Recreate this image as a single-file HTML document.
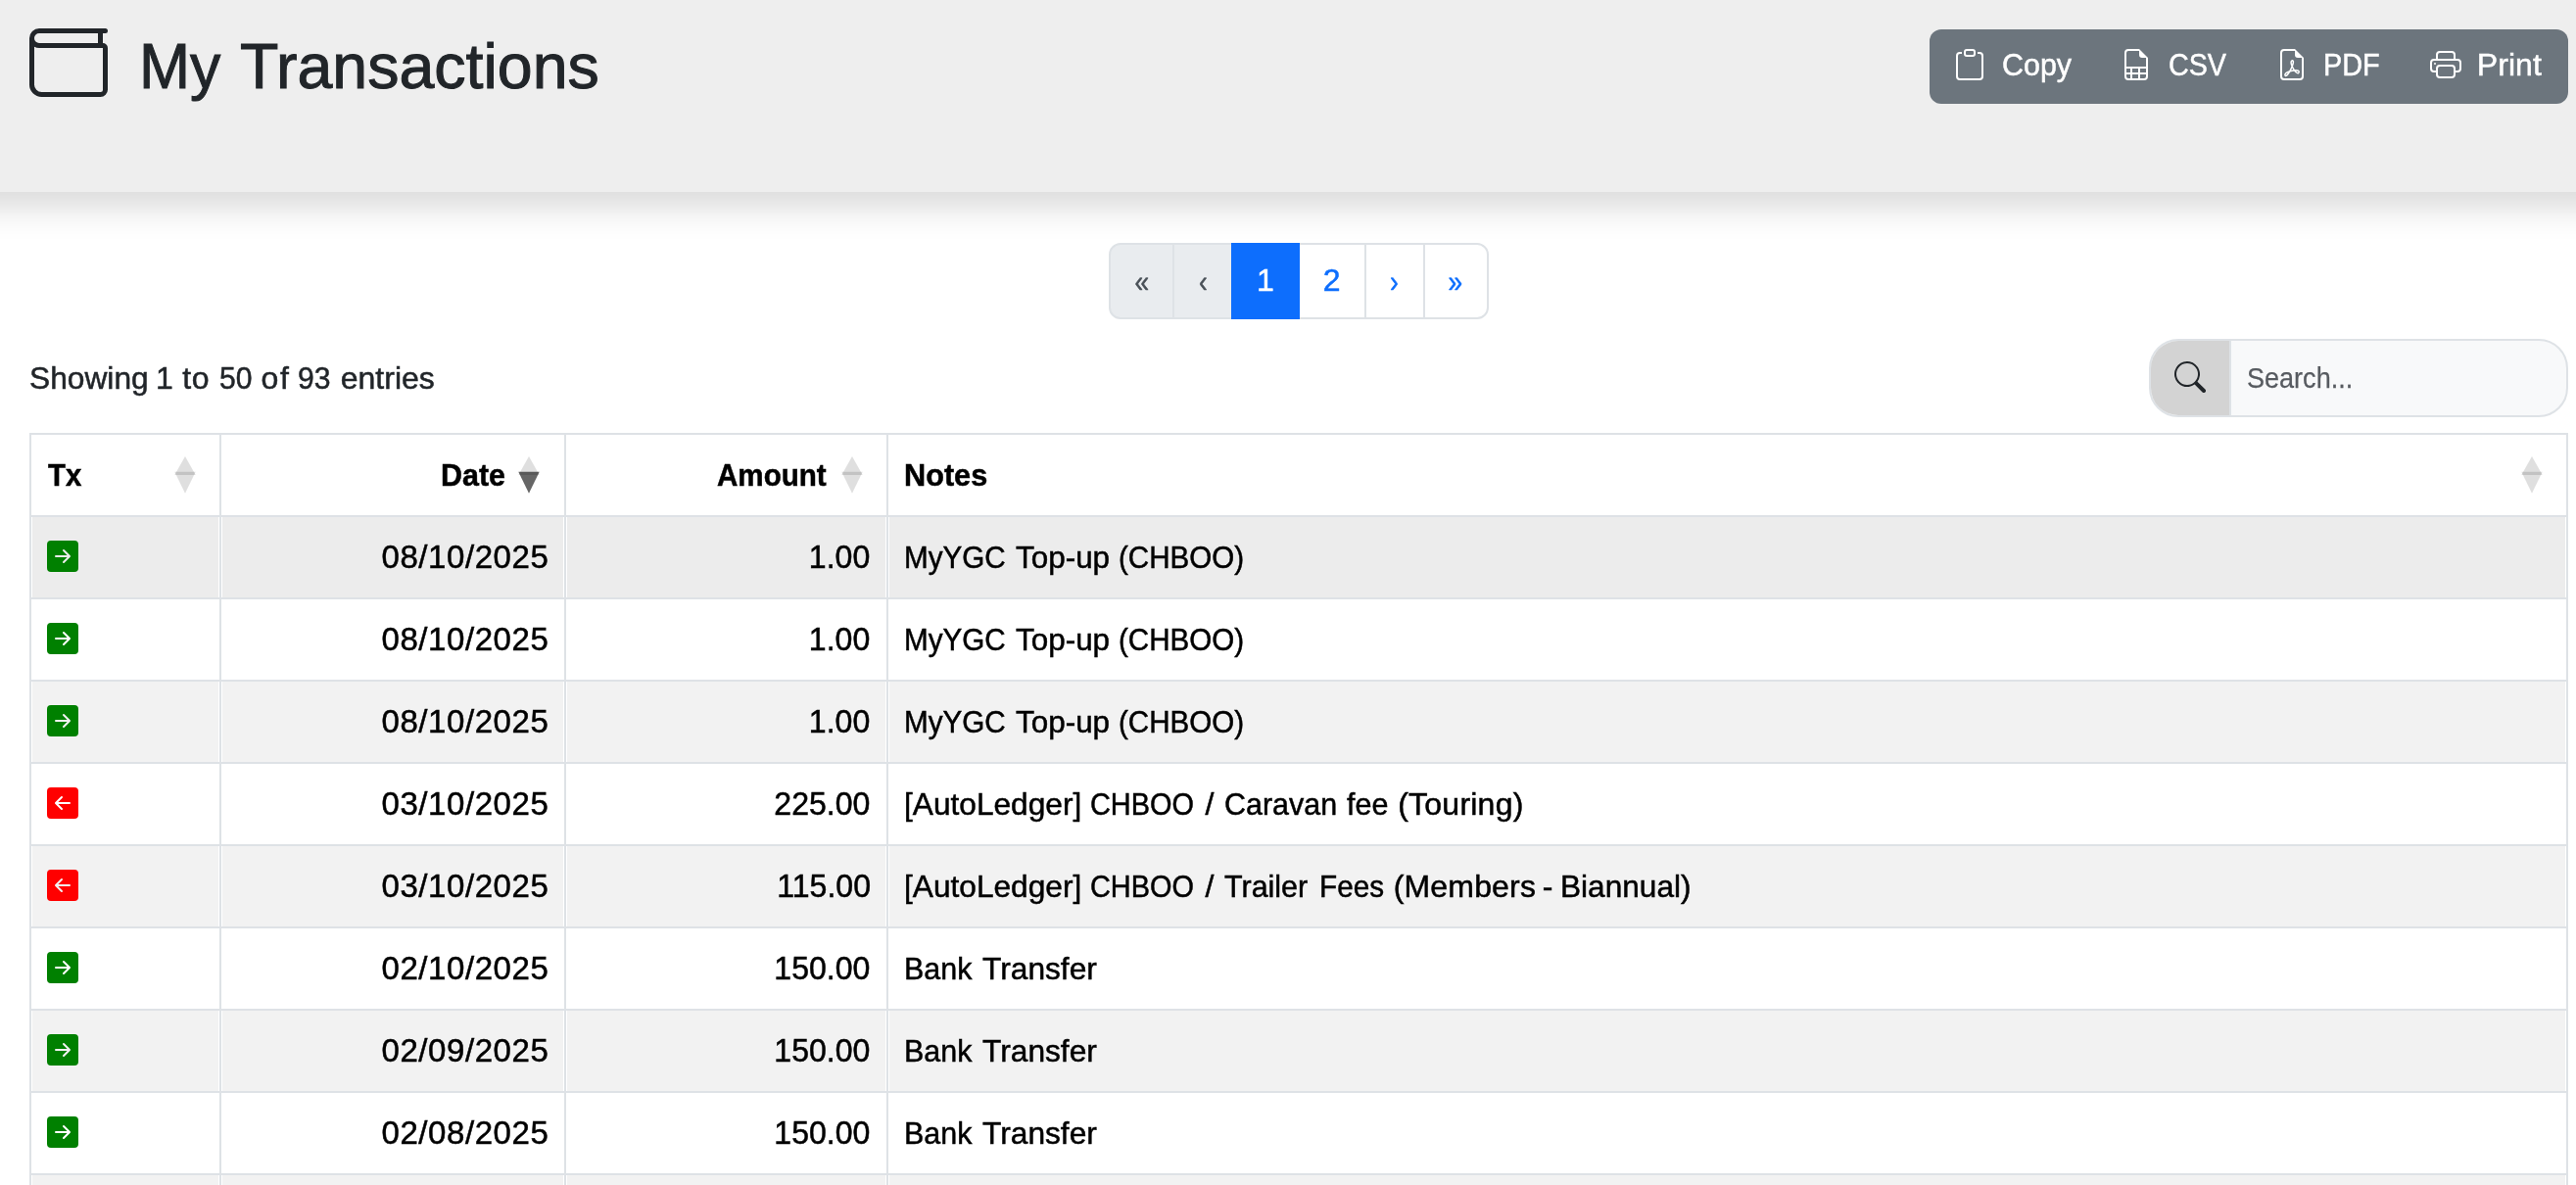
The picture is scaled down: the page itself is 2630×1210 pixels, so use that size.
<!DOCTYPE html>
<html lang="en">
<head>
<meta charset="utf-8">
<title>My Transactions</title>
<style>
html,body{margin:0;padding:0;}
body{width:2630px;height:1210px;overflow:hidden;background:#fff;position:relative;font-family:"Liberation Sans",sans-serif;font-size:32px;color:#212529;line-height:48px;-webkit-text-stroke:.5px;}
*{box-sizing:border-box;}
.page{position:absolute;left:0;top:0;width:2630px;height:1210px;overflow:hidden;will-change:transform;background:#fff;}
.w{display:inline-block;transform-origin:0 50%;white-space:nowrap;}
.hdr{position:absolute;left:-100px;top:0;width:2830px;height:196px;background:#eeeeee;box-shadow:0 16px 32px rgba(0,0,0,.15);}
.wallet{position:absolute;left:130px;top:24px;width:80px;height:80px;fill:#212529;}
.title{position:absolute;left:242px;top:28.5px;-webkit-text-stroke:1px #212529;margin:0;font-size:65px;line-height:77px;font-weight:400;color:#212529;white-space:nowrap;}
.btns{position:absolute;left:2070px;top:30px;width:652px;height:76px;background:#6c757d;border-radius:12px;color:#fff;}
.btns .b{position:absolute;top:0;height:76px;line-height:73px;white-space:nowrap;font-size:32px;}
.btns svg{position:absolute;width:32px;height:32px;fill:#fff;top:20px;}
.pager{position:absolute;left:1132px;top:248px;height:78px;display:flex;}
.pager div{height:78px;border:2px solid #dee2e6;margin-left:-2px;line-height:72px;text-align:center;font-size:32px;color:#0d6efd;background:#fff;}
.pager div:first-child{margin-left:0;border-radius:12px 0 0 12px;}
.pager div:last-child{border-radius:0 12px 12px 0;}
.pager .dis{background:#e9ecef;color:#495057;}
.pager .act{background:#0d6efd;border-color:#0d6efd;color:#fff;position:relative;z-index:2;}
.pager .g{display:inline-block;transform:scaleX(.82);position:relative;top:1px;}
.info{position:absolute;left:30px;top:362px;white-space:nowrap;color:#212529;}
.search{position:absolute;left:2194px;top:346px;width:428px;height:80px;border:2px solid #dee2e6;border-radius:30px;background:#f8f9fa;overflow:hidden;}
.search .addon{position:absolute;left:0;top:0;width:82px;height:76px;background:#d3d3d3;border-right:2px solid #dee2e6;}
.search svg{position:absolute;left:23.5px;top:20.5px;width:32px;height:32px;fill:#212529;}
.search .ph{position:absolute;top:14px;color:#575b60;-webkit-text-stroke:.25px;font-size:29px;line-height:48px;}
table{position:absolute;left:30px;top:442px;width:2592px;border-collapse:collapse;table-layout:fixed;color:#000;}
td,th{border:2px solid #dee2e6;height:84px;padding:0 16px;vertical-align:middle;white-space:nowrap;overflow:hidden;position:relative;}
th{font-weight:700;text-align:left;}
th .w{position:absolute;top:17px;}
.r{text-align:right;}
tr.s td{background:#f2f2f2;box-shadow:inset 1px 0 0 #fff,inset -1px 0 0 #fff;}
tr.h td{background:#ececec;box-shadow:inset 1px 0 0 #fff,inset -1px 0 0 #fff;}
.ic{display:block;width:32px;height:32px;position:relative;top:-1px;}
.sort{position:absolute;width:22px;height:38px;top:22px;}
.n{font-size:33px;}
</style>
</head>
<body>
<div class="page">
<div class="hdr">
<svg viewBox="0 0 16 16" class="wallet"><path d="M0 3a2 2 0 0 1 2-2h13.5a.5.5 0 0 1 0 1H15v2a1 1 0 0 1 1 1v8.5a1.5 1.5 0 0 1-1.5 1.5h-12A2.5 2.5 0 0 1 0 12.5zm1 1.732V12.5A1.5 1.5 0 0 0 2.5 14h12a.5.5 0 0 0 .5-.5V5H2a2 2 0 0 1-1-.268M1 3a1 1 0 0 0 1 1h12V2H2a1 1 0 0 0-1 1"/></svg>
<h2 class="title"><span class="w" style="transform:scaleX(0.9622);margin-left:0.270px;margin-right:-2.471px;">My</span> <span class="w" style="transform:scaleX(0.9924);">Transactions</span></h2>
<div class="btns">
<svg viewBox="0 0 16 16" style="left:25px"><path d="M4 1.5H3a2 2 0 0 0-2 2V14a2 2 0 0 0 2 2h10a2 2 0 0 0 2-2V3.5a2 2 0 0 0-2-2h-1v1h1a1 1 0 0 1 1 1V14a1 1 0 0 1-1 1H3a1 1 0 0 1-1-1V3.5a1 1 0 0 1 1-1h1z"/><path d="M9.5 1a.5.5 0 0 1 .5.5v1a.5.5 0 0 1-.5.5h-3a.5.5 0 0 1-.5-.5v-1a.5.5 0 0 1 .5-.5zm-3-1A1.5 1.5 0 0 0 5 1.5v1A1.5 1.5 0 0 0 6.5 4h3A1.5 1.5 0 0 0 11 2.5v-1A1.5 1.5 0 0 0 9.5 0z"/></svg>
<span class="b w" style="left:73.986px;transform:scaleX(0.9514);">Copy</span>
<svg viewBox="0 0 16 16" style="left:195px"><path d="M14 14V4.5L9.5 0H4a2 2 0 0 0-2 2v12a2 2 0 0 0 2 2h8a2 2 0 0 0 2-2M9.5 3A1.5 1.5 0 0 0 11 4.5h2V9H3V2a1 1 0 0 1 1-1h5.5zM3 12v-2h2v2zm0 1h2v2H4a1 1 0 0 1-1-1zm3 2v-2h3v2zm4 0v-2h3v1a1 1 0 0 1-1 1zm3-3h-3v-2h3zm-7 0v-2h3v2z"/></svg>
<span class="b w" style="left:243.928px;transform:scaleX(0.8961);">CSV</span>
<svg viewBox="0 0 16 16" style="left:354px"><path d="M14 14V4.5L9.5 0H4a2 2 0 0 0-2 2v12a2 2 0 0 0 2 2h8a2 2 0 0 0 2-2M9.5 3A1.5 1.5 0 0 0 11 4.5h2V14a1 1 0 0 1-1 1H4a1 1 0 0 1-1-1V2a1 1 0 0 1 1-1h5.5z"/><path d="M4.603 14.087a.8.8 0 0 1-.438-.42c-.195-.388-.13-.776.08-1.102.198-.307.526-.568.897-.787a7.7 7.7 0 0 1 1.482-.645 20 20 0 0 0 1.062-2.227 7.3 7.3 0 0 1-.43-1.295c-.086-.4-.119-.796-.046-1.136.075-.354.274-.672.65-.823.192-.077.4-.12.602-.077a.7.7 0 0 1 .477.365c.088.164.12.356.127.538.007.188-.012.396-.047.614-.084.51-.27 1.134-.52 1.794a11 11 0 0 0 .98 1.686 5.8 5.8 0 0 1 1.334.05c.364.066.734.195.96.465.12.144.193.32.2.518.007.192-.047.382-.138.563a1.04 1.04 0 0 1-.354.416.86.86 0 0 1-.51.138c-.331-.014-.654-.196-.933-.417a5.7 5.7 0 0 1-.911-.95 11.7 11.7 0 0 0-1.997.406 11.3 11.3 0 0 1-1.02 1.51c-.292.35-.609.656-.927.787a.8.8 0 0 1-.58.029m1.379-1.901q-.25.115-.459.238c-.328.194-.541.383-.647.547-.094.145-.096.25-.04.361q.016.032.026.044l.035-.012c.137-.056.355-.235.635-.572a8 8 0 0 0 .45-.606m1.640-1.330a13 13 0 0 1 1.010-.193 12 12 0 0 1-.510-.858 21 21 0 0 1-.500 1.050zm2.446.450q.226.245.435.410c.240.190.407.253.498.256a.1.1 0 0 0 .070-.015.3.3 0 0 0 .094-.125.44.44 0 0 0 .059-.200.1.1 0 0 0-.026-.063c-.052-.062-.200-.152-.518-.209a4 4 0 0 0-.612-.053zM8.078 7.800a7 7 0 0 0 .200-.828q.046-.282.038-.465a.6.6 0 0 0-.032-.198.5.5 0 0 0-.145.040c-.087.035-.158.106-.196.283-.040.192-.030.469.046.822q.036.167.090.346z"/></svg>
<span class="b w" style="left:402.021px;transform:scaleX(0.9023);">PDF</span>
<svg viewBox="0 0 16 16" style="left:511px"><path d="M2.5 8a.5.5 0 1 0 0-1 .5.5 0 0 0 0 1"/><path d="M5 1a2 2 0 0 0-2 2v2H2a2 2 0 0 0-2 2v3a2 2 0 0 0 2 2h1v1a2 2 0 0 0 2 2h6a2 2 0 0 0 2-2v-1h1a2 2 0 0 0 2-2V7a2 2 0 0 0-2-2h-1V3a2 2 0 0 0-2-2zM4 3a1 1 0 0 1 1-1h6a1 1 0 0 1 1 1v2H4zm1 5a2 2 0 0 0-2 2v1H2a1 1 0 0 1-1-1V7a1 1 0 0 1 1-1h12a1 1 0 0 1 1 1v3a1 1 0 0 1-1 1h-1v-1a2 2 0 0 0-2-2zm7 2v3a1 1 0 0 1-1 1H5a1 1 0 0 1-1-1v-3a1 1 0 0 1 1-1h6a1 1 0 0 1 1 1"/></svg>
<span class="b w" style="left:558.750px;letter-spacing:0.073px;">Print</span>
</div>
</div>
<div class="pager"><div class="dis" style="width:67px"><span class="g">«</span></div><div class="dis" style="width:62px"><span class="g">‹</span></div><div class="act" style="width:70px">1</div><div style="width:69.5px">2</div><div style="width:62px"><span class="g">›</span></div><div style="width:67px"><span class="g">»</span></div></div>
<div class="info"><span class="w" style="transform:scaleX(0.9913);margin-left:0.057px;margin-right:-2.597px;">Showing</span> <span class="w" style="margin-right:0.462px;">1</span> <span class="w" style="letter-spacing:0.609px;margin-right:0.647px;">to</span> <span class="w" style="transform:scaleX(0.9418);margin-right:-1.728px;">50</span> <span class="w" style="letter-spacing:1.703px;margin-right:-1.341px;">of</span> <span class="w" style="transform:scaleX(0.9418);margin-right:-0.928px;">93</span> <span class="w" style="letter-spacing:0.026px;">entries</span></div>
<div class="search"><div class="addon"><svg viewBox="0 0 16 16" ><path d="M11.742 10.344a6.5 6.5 0 1 0-1.397 1.398h-.001q.044.06.098.115l3.850 3.850a1 1 0 0 0 1.415-1.414l-3.850-3.850a1 1 0 0 0-.115-.100zM12 6.500a5.500 5.500 0 1 1-11 0 5.500 5.500 0 0 1 11 0"/></svg></div><div class="ph w" style="left:97.584px;transform:scaleX(0.9325);">Search...</div></div>
<table><colgroup><col style="width:194px"><col style="width:352px"><col style="width:329px"><col></colgroup>
<thead><tr><th><span class="w" style="left:16.629px;transform:scaleX(0.9173);">Tx</span><svg class="sort" style="right:24.3px" viewBox="0 0 22 38"><polygon points="11,0 21.7,18.9 0.3,18.9" fill="#000" fill-opacity=".125"/><polygon points="0.3,15.8 21.7,15.8 11,37.7" fill="#000" fill-opacity=".125"/></svg></th><th><span class="w" style="left:223.935px;transform:scaleX(0.9514);">Date</span><svg class="sort" style="right:25.2px" viewBox="0 0 22 38"><polygon points="11,0 21.7,18.9 0.3,18.9" fill="#000" fill-opacity=".125"/><polygon points="0.3,15.8 21.7,15.8 11,37.7" fill="#000" fill-opacity=".6"/></svg></th><th><span class="w" style="left:153.931px;transform:scaleX(0.9244);">Amount</span><svg class="sort" style="right:24px" viewBox="0 0 22 38"><polygon points="11,0 21.7,18.9 0.3,18.9" fill="#000" fill-opacity=".125"/><polygon points="0.3,15.8 21.7,15.8 11,37.7" fill="#000" fill-opacity=".125"/></svg></th><th><span class="w" style="left:16.123px;transform:scaleX(0.9583);">Notes</span><svg class="sort" style="right:24px" viewBox="0 0 22 38"><polygon points="11,0 21.7,18.9 0.3,18.9" fill="#000" fill-opacity=".125"/><polygon points="0.3,15.8 21.7,15.8 11,37.7" fill="#000" fill-opacity=".125"/></svg></th></tr></thead>
<tbody>
<tr class="h"><td><svg viewBox="0 0 16 16" class="ic" fill="#008000"><path d="M0 14a2 2 0 0 0 2 2h12a2 2 0 0 0 2-2V2a2 2 0 0 0-2-2H2a2 2 0 0 0-2 2zm4.5-6.5h5.793L8.146 5.354a.5.5 0 1 1 .708-.708l3 3a.5.5 0 0 1 0 .708l-3 3a.5.5 0 0 1-.708-.708L10.293 8.5H4.5a.5.5 0 0 1 0-1"/></svg></td><td class="r"><span class="w n" style="letter-spacing:0.566px;margin-right:-0.369px;">08/10/2025</span></td><td class="r"><span class="w n" style="font-size:32.5px;transform-origin:100% 50%;transform:scaleX(0.9864);margin-right:0.386px;">1.00</span></td><td><span class="w" style="transform:scaleX(0.9260);margin-left:-0.021px;margin-right:-7.325px;">MyYGC</span> <span class="w" style="transform:scaleX(0.9821);margin-right:-1.073px;">Top-up</span> <span class="w" style="transform:scaleX(0.9238);">(CHBOO)</span></td></tr>
<tr><td><svg viewBox="0 0 16 16" class="ic" fill="#008000"><path d="M0 14a2 2 0 0 0 2 2h12a2 2 0 0 0 2-2V2a2 2 0 0 0-2-2H2a2 2 0 0 0-2 2zm4.5-6.5h5.793L8.146 5.354a.5.5 0 1 1 .708-.708l3 3a.5.5 0 0 1 0 .708l-3 3a.5.5 0 0 1-.708-.708L10.293 8.5H4.5a.5.5 0 0 1 0-1"/></svg></td><td class="r"><span class="w n" style="letter-spacing:0.566px;margin-right:-0.369px;">08/10/2025</span></td><td class="r"><span class="w n" style="font-size:32.5px;transform-origin:100% 50%;transform:scaleX(0.9864);margin-right:0.386px;">1.00</span></td><td><span class="w" style="transform:scaleX(0.9260);margin-left:-0.021px;margin-right:-7.325px;">MyYGC</span> <span class="w" style="transform:scaleX(0.9821);margin-right:-1.073px;">Top-up</span> <span class="w" style="transform:scaleX(0.9238);">(CHBOO)</span></td></tr>
<tr class="s"><td><svg viewBox="0 0 16 16" class="ic" fill="#008000"><path d="M0 14a2 2 0 0 0 2 2h12a2 2 0 0 0 2-2V2a2 2 0 0 0-2-2H2a2 2 0 0 0-2 2zm4.5-6.5h5.793L8.146 5.354a.5.5 0 1 1 .708-.708l3 3a.5.5 0 0 1 0 .708l-3 3a.5.5 0 0 1-.708-.708L10.293 8.5H4.5a.5.5 0 0 1 0-1"/></svg></td><td class="r"><span class="w n" style="letter-spacing:0.566px;margin-right:-0.369px;">08/10/2025</span></td><td class="r"><span class="w n" style="font-size:32.5px;transform-origin:100% 50%;transform:scaleX(0.9864);margin-right:0.386px;">1.00</span></td><td><span class="w" style="transform:scaleX(0.9260);margin-left:-0.021px;margin-right:-7.325px;">MyYGC</span> <span class="w" style="transform:scaleX(0.9821);margin-right:-1.073px;">Top-up</span> <span class="w" style="transform:scaleX(0.9238);">(CHBOO)</span></td></tr>
<tr><td><svg viewBox="0 0 16 16" class="ic" fill="#ff0000"><path d="M16 14a2 2 0 0 1-2 2H2a2 2 0 0 1-2-2V2a2 2 0 0 1 2-2h12a2 2 0 0 1 2 2zm-4.5-6.5H5.707l2.147-2.146a.5.5 0 1 0-.708-.708l-3 3a.5.5 0 0 0 0 .708l3 3a.5.5 0 0 0 .708-.708L5.707 8.5H11.5a.5.5 0 0 0 0-1"/></svg></td><td class="r"><span class="w n" style="letter-spacing:0.566px;margin-right:-0.369px;">03/10/2025</span></td><td class="r"><span class="w n" style="font-size:32.5px;transform-origin:100% 50%;transform:scaleX(0.9864);margin-right:0.286px;">225.00</span></td><td><span class="w" style="transform:scaleX(0.9891);margin-left:-0.231px;margin-right:-1.887px;">[AutoLedger]</span> <span class="w" style="transform:scaleX(0.9030);margin-right:-8.807px;">CHBOO</span> <span class="w" style="margin-right:1.755px;">/</span> <span class="w" style="transform:scaleX(0.9515);margin-right:-4.692px;">Caravan</span> <span class="w" style="transform:scaleX(0.9528);margin-right:-1.363px;">fee</span> <span class="w" style="letter-spacing:0.236px;">(Touring)</span></td></tr>
<tr class="s"><td><svg viewBox="0 0 16 16" class="ic" fill="#ff0000"><path d="M16 14a2 2 0 0 1-2 2H2a2 2 0 0 1-2-2V2a2 2 0 0 1 2-2h12a2 2 0 0 1 2 2zm-4.5-6.5H5.707l2.147-2.146a.5.5 0 1 0-.708-.708l-3 3a.5.5 0 0 0 0 .708l3 3a.5.5 0 0 0 .708-.708L5.707 8.5H11.5a.5.5 0 0 0 0-1"/></svg></td><td class="r"><span class="w n" style="letter-spacing:0.566px;margin-right:-0.369px;">03/10/2025</span></td><td class="r"><span class="w n" style="font-size:32.5px;transform-origin:100% 50%;transform:scaleX(0.9864);margin-right:0.286px;">115.00</span></td><td><span class="w" style="transform:scaleX(0.9891);margin-left:-0.231px;margin-right:-1.887px;">[AutoLedger]</span> <span class="w" style="transform:scaleX(0.9030);margin-right:-8.807px;">CHBOO</span> <span class="w" style="margin-right:2.107px;">/</span> <span class="w" style="transform:scaleX(0.9521);margin-right:-1.637px;">Trailer</span> <span class="w" style="transform:scaleX(0.9280);margin-right:-4.457px;">Fees</span> <span class="w" style="letter-spacing:0.169px;margin-right:-2.260px;">(Members</span> <span class="w" style="margin-right:-1.125px;">-</span> <span class="w" style="transform:scaleX(0.9875);">Biannual)</span></td></tr>
<tr><td><svg viewBox="0 0 16 16" class="ic" fill="#008000"><path d="M0 14a2 2 0 0 0 2 2h12a2 2 0 0 0 2-2V2a2 2 0 0 0-2-2H2a2 2 0 0 0-2 2zm4.5-6.5h5.793L8.146 5.354a.5.5 0 1 1 .708-.708l3 3a.5.5 0 0 1 0 .708l-3 3a.5.5 0 0 1-.708-.708L10.293 8.5H4.5a.5.5 0 0 1 0-1"/></svg></td><td class="r"><span class="w n" style="letter-spacing:0.566px;margin-right:-0.369px;">02/10/2025</span></td><td class="r"><span class="w n" style="font-size:32.5px;transform-origin:100% 50%;transform:scaleX(0.9864);margin-right:0.286px;">150.00</span></td><td><span class="w" style="transform:scaleX(0.9512);margin-left:0.435px;margin-right:-2.716px;">Bank</span> <span class="w" style="transform:scaleX(0.9908);">Transfer</span></td></tr>
<tr class="s"><td><svg viewBox="0 0 16 16" class="ic" fill="#008000"><path d="M0 14a2 2 0 0 0 2 2h12a2 2 0 0 0 2-2V2a2 2 0 0 0-2-2H2a2 2 0 0 0-2 2zm4.5-6.5h5.793L8.146 5.354a.5.5 0 1 1 .708-.708l3 3a.5.5 0 0 1 0 .708l-3 3a.5.5 0 0 1-.708-.708L10.293 8.5H4.5a.5.5 0 0 1 0-1"/></svg></td><td class="r"><span class="w n" style="letter-spacing:0.566px;margin-right:-0.369px;">02/09/2025</span></td><td class="r"><span class="w n" style="font-size:32.5px;transform-origin:100% 50%;transform:scaleX(0.9864);margin-right:0.286px;">150.00</span></td><td><span class="w" style="transform:scaleX(0.9512);margin-left:0.435px;margin-right:-2.716px;">Bank</span> <span class="w" style="transform:scaleX(0.9908);">Transfer</span></td></tr>
<tr><td><svg viewBox="0 0 16 16" class="ic" fill="#008000"><path d="M0 14a2 2 0 0 0 2 2h12a2 2 0 0 0 2-2V2a2 2 0 0 0-2-2H2a2 2 0 0 0-2 2zm4.5-6.5h5.793L8.146 5.354a.5.5 0 1 1 .708-.708l3 3a.5.5 0 0 1 0 .708l-3 3a.5.5 0 0 1-.708-.708L10.293 8.5H4.5a.5.5 0 0 1 0-1"/></svg></td><td class="r"><span class="w n" style="letter-spacing:0.566px;margin-right:-0.369px;">02/08/2025</span></td><td class="r"><span class="w n" style="font-size:32.5px;transform-origin:100% 50%;transform:scaleX(0.9864);margin-right:0.286px;">150.00</span></td><td><span class="w" style="transform:scaleX(0.9512);margin-left:0.435px;margin-right:-2.716px;">Bank</span> <span class="w" style="transform:scaleX(0.9908);">Transfer</span></td></tr>
<tr class="s"><td><svg viewBox="0 0 16 16" class="ic" fill="#008000"><path d="M0 14a2 2 0 0 0 2 2h12a2 2 0 0 0 2-2V2a2 2 0 0 0-2-2H2a2 2 0 0 0-2 2zm4.5-6.5h5.793L8.146 5.354a.5.5 0 1 1 .708-.708l3 3a.5.5 0 0 1 0 .708l-3 3a.5.5 0 0 1-.708-.708L10.293 8.5H4.5a.5.5 0 0 1 0-1"/></svg></td><td class="r"><span class="w n" style="letter-spacing:0.566px;margin-right:-0.369px;">02/07/2025</span></td><td class="r"><span class="w n" style="font-size:32.5px;transform-origin:100% 50%;transform:scaleX(0.9864);margin-right:0.286px;">150.00</span></td><td><span class="w" style="transform:scaleX(0.9512);margin-left:0.435px;margin-right:-2.716px;">Bank</span> <span class="w" style="transform:scaleX(0.9908);">Transfer</span></td></tr>
</tbody></table>
</div>
</body>
</html>
